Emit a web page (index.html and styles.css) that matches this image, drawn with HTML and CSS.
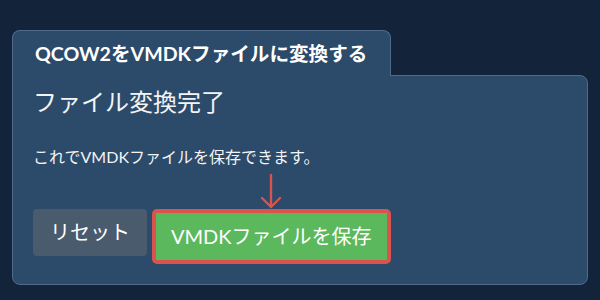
FILE: index.html
```html
<!DOCTYPE html>
<html lang="ja">
<head>
  <meta charset="UTF-8">
  <title>QCOW2をVMDKファイルに変換する</title>
  <link rel="stylesheet" href="styles.css">
</head>
<body>

<div class="converter">
  <div class="tab">QCOW2をVMDKファイルに変換する</div>
  <div class="panel">
    <h2>ファイル変換完了</h2>
    <p class="note">これでVMDKファイルを保存できます。</p>
    <div class="actions">
      <button class="btn btn-reset">リセット</button>
      <button class="btn btn-save">
        VMDKファイルを保存
        <svg class="pointer" width="22" height="36" viewBox="0 0 22 36">
          <path d="M11 1 V33 M2 24 L11 33 L20 24" fill="none" stroke="#d9534f" stroke-width="2.4" stroke-linecap="round" stroke-linejoin="round"/>
        </svg>
      </button>
    </div>
  </div>
</div>

</body>
</html>
```

FILE: styles.css
```css
body {
  margin: 0;
  background: #12233a;
  font-family: Lato, "Noto Sans CJK JP", sans-serif;
  color: #f2f4f7;
}

.converter {
  padding: 30px 12px 0 12px;
}

.tab {
  position: relative;
  display: inline-block;
  margin-bottom: -1px;
  padding: 9px 23px 9px 22px;
  background: #2c4a6a;
  border: 1px solid #4f6c8d;
  border-bottom: none;
  border-radius: 8px 8px 0 0;
  font-size: 19.6px;
  font-weight: bold;
  line-height: 27px;
  color: #fff;
  z-index: 1;
}

.panel {
  background: #2c4a6a;
  border: 1px solid #4f6c8d;
  border-radius: 0 8px 8px 8px;
  padding: 12px 20px 20px 20px;
}

.panel h2 {
  margin: 0 0 29px 0;
  font-size: 24px;
  font-weight: normal;
  line-height: 28px;
}

.note {
  margin: 0 0 40px 0;
  font-size: 16px;
  line-height: 24px;
}

.actions {
  display: flex;
  align-items: flex-start;
  gap: 5px;
}

.btn {
  font-family: Lato, "Noto Sans CJK JP", sans-serif;
  font-size: 20px;
  line-height: 27px;
  color: #fff;
  border: none;
  border-radius: 4px;
  padding: 10px 17px;
  cursor: pointer;
}

.btn-reset {
  background: #4a5b6e;
}

.btn-save {
  position: relative;
  background: #5cb85c;
  border: 4px solid #d9534f;
  border-radius: 5px;
  padding: 10px 15px;
}

.pointer {
  position: absolute;
  left: 50%;
  bottom: 100%;
  margin-left: -11px;
  margin-bottom: 3px;
}
```
